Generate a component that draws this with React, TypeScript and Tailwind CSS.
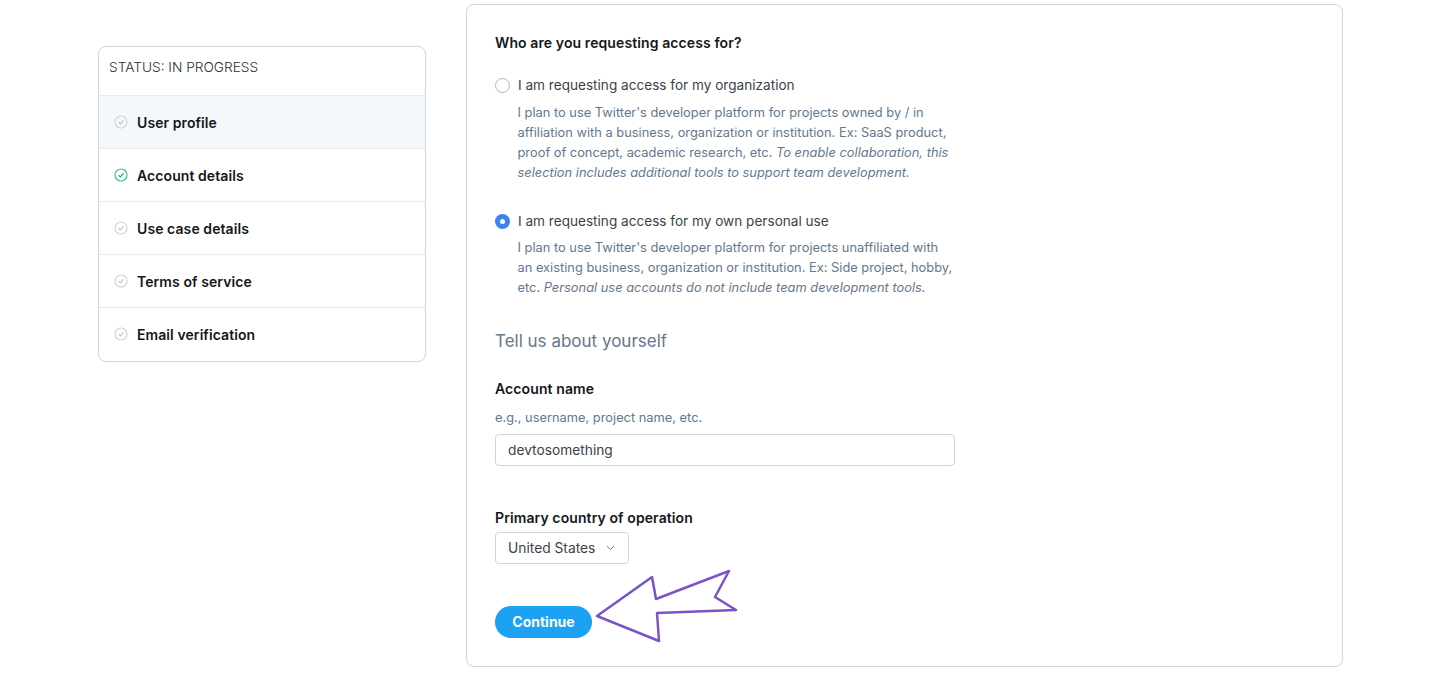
import React from 'react';

const steps = [
  { label: 'User profile', active: true, done: false },
  { label: 'Account details', active: false, done: true },
  { label: 'Use case details', active: false, done: false },
  { label: 'Terms of service', active: false, done: false },
  { label: 'Email verification', active: false, done: false },
];

const CheckIcon = ({ done }: { done: boolean }) => (
  <svg width="14" height="14" viewBox="0 0 14 14" fill="none" className="shrink-0">
    <circle cx="7" cy="7" r="6" stroke={done ? '#34c787' : '#ccd6dd'} strokeWidth="1.2" />
    <path d="M4.6 7.2l1.7 1.7 3.2-3.6" stroke={done ? '#1f9d63' : '#b8c4cc'} strokeWidth="1.1" />
  </svg>
);

const App: React.FC = () => {
  return (
    <div className="w-[1440px] h-[700px] bg-white overflow-hidden font-['Inter',sans-serif] text-[#14171a]">
      <div className="flex items-start pl-[98px] pt-1 gap-10">
        <div className="mt-[42px] w-[328px] h-[316px] border border-[#ccd6dd] rounded-lg overflow-hidden">
          <div className="h-[48px] pl-[10px] pt-[11px] text-[13.7px] leading-[18px] font-light text-[#292f33]">STATUS: IN PROGRESS</div>
          {steps.map((step) => (
            <div
              key={step.label}
              className={`h-[53px] flex items-center gap-[9px] pl-[15px] border-t border-[#e6ecf0] ${step.active ? 'bg-[#f5f8fa]' : ''}`}
            >
              <CheckIcon done={step.done} />
              <span className="mt-px text-[14px] tracking-[0.08px] font-semibold">{step.label}</span>
            </div>
          ))}
        </div>

        <div className="w-[877px] h-[663px] border border-[#ccd6dd] rounded-lg pl-[28px] pt-[29px]">
          <div className="text-[14px] tracking-[0.1px] leading-[18px] font-semibold">Who are you requesting access for?</div>

          <div className="mt-[24px] flex items-center gap-2 h-[18px]">
            <span className="w-[15px] h-[15px] rounded-full border border-[#aab8c2] bg-white shrink-0" />
            <span className="text-[13.6px] text-[#3c4349]">I am requesting access for my organization</span>
          </div>
          <p className="mt-[9px] ml-[22.5px] w-[435px] text-[12.85px] leading-5 text-[#64778d]">
            I plan to use Twitter's developer platform for projects owned by / in affiliation with a business, organization or institution. Ex: SaaS product, proof of concept, academic research, etc. <em>To enable collaboration, this selection includes additional tools to support team development.</em>
          </p>

          <div className="mt-[29px] flex items-center gap-2 h-[18px]">
            <span className="w-[15px] h-[15px] rounded-full bg-[#3b82f6] shrink-0 flex items-center justify-center">
              <span className="w-[5px] h-[5px] rounded-full bg-white" />
            </span>
            <span className="text-[13.6px] text-[#3c4349]">I am requesting access for my own personal use</span>
          </div>
          <p className="mt-[8px] ml-[22.5px] w-[435px] text-[12.85px] leading-5 text-[#64778d]">
            I plan to use Twitter's developer platform for projects unaffiliated with an existing business, organization or institution. Ex: Side project, hobby, etc. <em>Personal use accounts do not include team development tools.</em>
          </p>

          <h2 className="mt-[31px] text-[17px] leading-6 text-[#64778d]">Tell us about yourself</h2>

          <div className="mt-[27px] text-[14px] tracking-[0.1px] leading-[18px] font-semibold">Account name</div>
          <div className="mt-[11px] text-[12.85px] leading-[18px] text-[#64778d]">e.g., username, project name, etc.</div>
          <div className="mt-[7px] w-[460px] h-[32px] border border-[#ccd6dd] rounded flex items-center pl-3 text-[13.75px] text-[#3c4349]">devtosomething</div>

          <div className="mt-[43px] text-[14px] tracking-[0.1px] leading-[18px] font-semibold">Primary country of operation</div>
          <div className="mt-[5px] w-[134px] h-[32px] border border-[#ccd6dd] rounded flex items-center pl-3 gap-[11px] text-[13.8px] text-[#3c4349]">
            United States
            <svg width="9" height="6" viewBox="0 0 9 6" fill="none">
              <path d="M1 1.2l3.5 3.3L8 1.2" stroke="#657786" strokeWidth="1" />
            </svg>
          </div>

          <div className="relative mt-[42px] w-[97px] h-[32px]">
            <button className="w-full h-full pb-px rounded-full bg-[#1da1f2] text-white text-[14px] font-bold">Continue</button>
            <svg width="150" height="80" viewBox="0 0 150 80" fill="none" className="absolute left-[96px] top-[-39px]">
              <path
                d="M6 49L61 10L65 32L138 4L124 30L145 43L66 46L68 74Z"
                stroke="#7c52c8"
                strokeWidth="2.5"
                strokeLinejoin="round"
              />
            </svg>
          </div>
        </div>
      </div>
    </div>
  );
};

export default App;
